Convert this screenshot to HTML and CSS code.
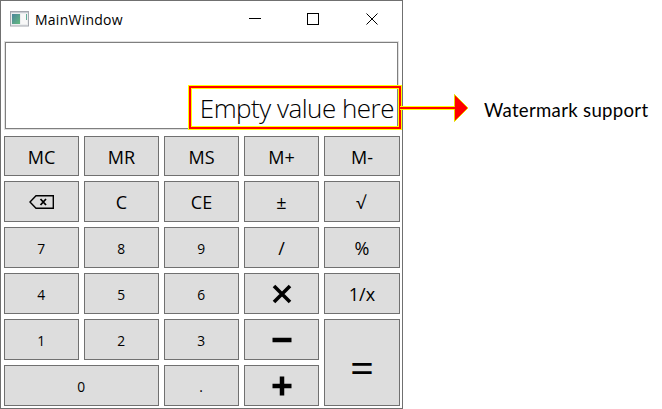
FILE: index.html
```html
<!DOCTYPE html>
<html lang="en">
<head>
<meta charset="utf-8">
<title>MainWindow</title>
<link rel="stylesheet" href="styles.css">
</head>
<body>
<main class="scene">
  <section class="window">
    <header class="titlebar">
      <svg class="app-icon" width="19" height="16" viewBox="0 0 19 16">
        <defs><linearGradient id="g" x2="1" y2="1"><stop stop-color="#4b849b"/><stop offset="1" stop-color="#63bb7f"/></linearGradient></defs>
        <rect x=".5" y=".5" width="18" height="14.5" fill="#eceeef" stroke="#a4a7ae"/>
        <path d="M1 1.5H18" stroke="#c9ccd3"/>
        <rect x="2" y="3" width="8" height="10" fill="url(#g)"/>
        <rect x="11" y="3" width="6" height="10" fill="#f8f8f8"/>
        <path d="M16.5 3v6" stroke="#62ad98"/>
      </svg>
      <h1 class="title"><span>MainWindow</span></h1>
      <svg class="controls" width="131" height="14" viewBox="0 0 131 14" fill="none" stroke="#000">
        <path d="M0 6.5H12"/>
        <rect x="58.500" y="1.500" width="11" height="11"/>
        <path d="M117.500 1.500l11 11M128.500 1.500l-11 11"/>
      </svg>
    </header>
    <div class="display"><span class="watermark">Empty value here</span></div>
    <div class="keys">
      <button class="key"><span>MC</span></button>
      <button class="key"><span>MR</span></button>
      <button class="key"><span>MS</span></button>
      <button class="key"><span>M+</span></button>
      <button class="key"><span>M-</span></button>
      <button class="key" aria-label="Backspace"><svg class="back" width="26" height="14" viewBox="0 0 26 14" fill="none" stroke="#000" stroke-width="1.400"><path d="M7 .8H24.300V13.200H7L1 7Z"/><path d="M11.500 4l5.500 6M17 4l-5.500 6" stroke-width="1.800"/></svg></button>
      <button class="key"><span>C</span></button>
      <button class="key"><span>CE</span></button>
      <button class="key"><span>±</span></button>
      <button class="key root"><span>√</span></button>
      <button class="key digit"><span>7</span></button>
      <button class="key digit"><span>8</span></button>
      <button class="key digit"><span>9</span></button>
      <button class="key"><span>/</span></button>
      <button class="key"><span>%</span></button>
      <button class="key digit"><span>4</span></button>
      <button class="key digit"><span>5</span></button>
      <button class="key digit"><span>6</span></button>
      <button class="key" aria-label="Multiply"><svg width="20" height="20" viewBox="0 0 20 20" stroke="#000" stroke-width="3.600"><path d="M2 2l16 16M18 2L2 18"/></svg></button>
      <button class="key"><span>1/x</span></button>
      <button class="key digit"><span>1</span></button>
      <button class="key digit"><span>2</span></button>
      <button class="key digit"><span>3</span></button>
      <button class="key" aria-label="Subtract"><svg width="20" height="20" viewBox="0 0 20 20" stroke="#000" stroke-width="4.500"><path d="M.5 10H19.500"/></svg></button>
      <button class="key tall"><span>=</span></button>
      <button class="key digit wide"><span>0</span></button>
      <button class="key digit"><span>.</span></button>
      <button class="key" aria-label="Add"><svg width="20" height="20" viewBox="0 0 20 20" stroke="#000" stroke-width="4.500"><path d="M.5 10H19.500M10 .5V19.500"/></svg></button>
    </div>
  </section>
  <p class="note">Watermark support</p>
  <svg class="callout" width="282" height="46" viewBox="0 0 282 46" fill="none">
    <rect x="2" y="2" width="210" height="41" stroke="#ff0" stroke-width="4"/>
    <rect x="2" y="2" width="210" height="41" stroke="red" stroke-width="2"/>
    <path d="M212 23H268" stroke="#ff0" stroke-width="4"/>
    <path d="M266.500 9.500L280 23L266.500 36.500Z" fill="red" stroke="#e6d800"/>
    <path d="M212 23H268" stroke="red" stroke-width="2"/>
  </svg>
</main>
</body>
</html>
```
FILE: styles.css
```css
* { box-sizing: border-box; }
body { margin: 0; background: #fff; color: #000; font-family: "Open Sans", "Noto Sans", sans-serif; }
.scene { position: relative; display: flex; width: 662px; height: 409px; }
.window { width: 403px; height: 409px; border: 1px solid #707070; padding: 0 2px 2px 3px; }
.titlebar { display: flex; align-items: center; height: 40px; padding: 0 20px 4px 6px; }
.title { flex: 1; margin: 2px 0 0 6px; font-size: 14px; font-weight: 400; line-height: 20px; letter-spacing: .25px; }
.controls { flex: none; }
.display { display: flex; justify-content: flex-end; align-items: flex-end; width: 395px; height: 89px; border: 1px solid #e0e0e0; box-shadow: inset 0 0 0 1px #7f7f7f; padding: 0 4px 3px; }
.watermark { font-size: 26px; font-weight: 300; line-height: 36px; letter-spacing: -.5px; white-space: nowrap; }
.keys { display: grid; grid-template-columns: repeat(4, 75px) 76px; grid-template-rows: 40px repeat(5, 41px); gap: 5px; margin-top: 6px; }
.key { display: flex; align-items: center; justify-content: center; min-width: 0; margin: 0; padding: 1px 0 0; border: 1px solid #707070; border-radius: 0; background: #ddd; color: #000; font: 400 18px "Open Sans", "Noto Sans", sans-serif; }
.key svg { display: block; margin: -1px 0 0; }
.key span { display: block; }
.digit { padding: 0 1px 0 0; }
.digit span { font-size: 15px; transform: scaleX(.92); }
.root span { margin-right: 2px; }
.wide { grid-column: span 2; }
.tall { grid-column: 5; grid-row: 5 / span 2; padding-top: 7px; font-size: 42px; }
.note { margin: 98px 0 0 81px; font: 400 18.600px/24px Lato, sans-serif; letter-spacing: .3px; white-space: nowrap; }
.callout { position: absolute; left: 188px; top: 85px; }
```
